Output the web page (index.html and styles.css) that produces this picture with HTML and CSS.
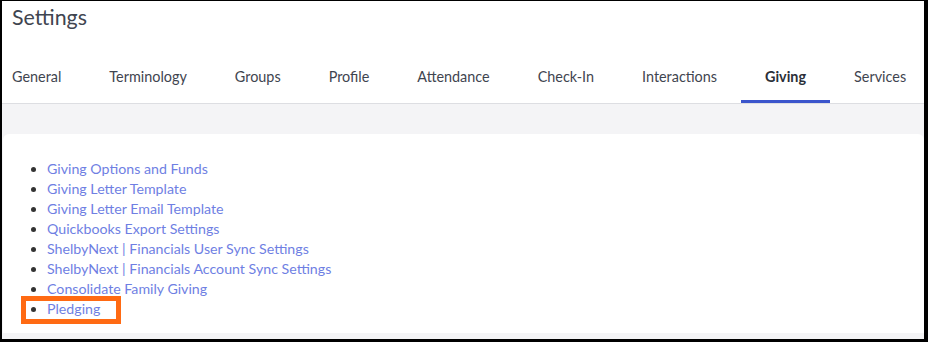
FILE: index.html
```html
<!DOCTYPE html>
<html>
<head>
<meta charset="utf-8">
<link rel="stylesheet" href="styles.css">
</head>
<body>
<div class="frame">
  <header class="header">
    <h1 class="title">Settings</h1>
    <nav class="tabs">
      <a class="tab first">General</a>
      <a class="tab">Terminology</a>
      <a class="tab">Groups</a>
      <a class="tab">Profile</a>
      <a class="tab">Attendance</a>
      <a class="tab">Check-In</a>
      <a class="tab">Interactions</a>
      <a class="tab active">Giving</a>
      <a class="tab">Services</a>
    </nav>
  </header>
  <main class="content">
    <section class="card">
      <ul class="links">
        <li><a>Giving Options and Funds</a></li>
        <li><a>Giving Letter Template</a></li>
        <li><a>Giving Letter Email Template</a></li>
        <li><a>Quickbooks Export Settings</a></li>
        <li><a>ShelbyNext | Financials User Sync Settings</a></li>
        <li><a>ShelbyNext | Financials Account Sync Settings</a></li>
        <li><a>Consolidate Family Giving</a></li>
        <li class="highlight"><a>Pledging</a></li>
      </ul>
    </section>
  </main>
</div>
</body>
</html>
```

FILE: styles.css
```css
html, body {
  margin: 0;
  padding: 0;
  background: #000;
}
.frame {
  width: 922px;
  height: 338px;
  margin: 1px 0 0 2px;
  background: #f4f4f6;
  font-family: Lato, "Noto Sans", sans-serif;
  overflow: hidden;
  display: flex;
  flex-direction: column;
}
.header {
  background: #fff;
  border-bottom: 1px solid #dddee2;
}
.title {
  margin: 0;
  padding: 2px 0 0 10px;
  height: 30px;
  font-size: 21.4px;
  font-weight: 400;
  color: #3f4550;
  line-height: 28px;
}
.tabs {
  display: flex;
  margin-top: 30px;
  height: 40px;
}
.tab {
  padding: 0 24px;
  font-size: 14.4px;
  color: #3f4550;
  line-height: 28px;
  height: 37px;
  border-bottom: 3px solid transparent;
  white-space: nowrap;
}
.tab.first {
  padding-left: 10px;
}
.tab.active {
  font-weight: 700;
  color: #2b2f38;
  border-bottom-color: #3b55cc;
}
.content {
  flex: 1;
  padding: 30px 0 0 1px;
}
.card {
  background: #fff;
  border-radius: 6px 6px 0 0;
  height: 199px;
  padding-top: 25px;
  box-sizing: border-box;
}
.links {
  margin: 0;
  padding: 0 0 0 44px;
  font-size: 14.2px;
  line-height: 20px;
}
.links li {
  color: #333;
}
.links a {
  color: #6f7fe3;
}
.highlight {
  position: relative;
}
.highlight::before {
  content: "";
  position: absolute;
  left: -26px;
  top: -3px;
  width: 90px;
  height: 18px;
  border: 5px solid #ff6a13;
}
```
